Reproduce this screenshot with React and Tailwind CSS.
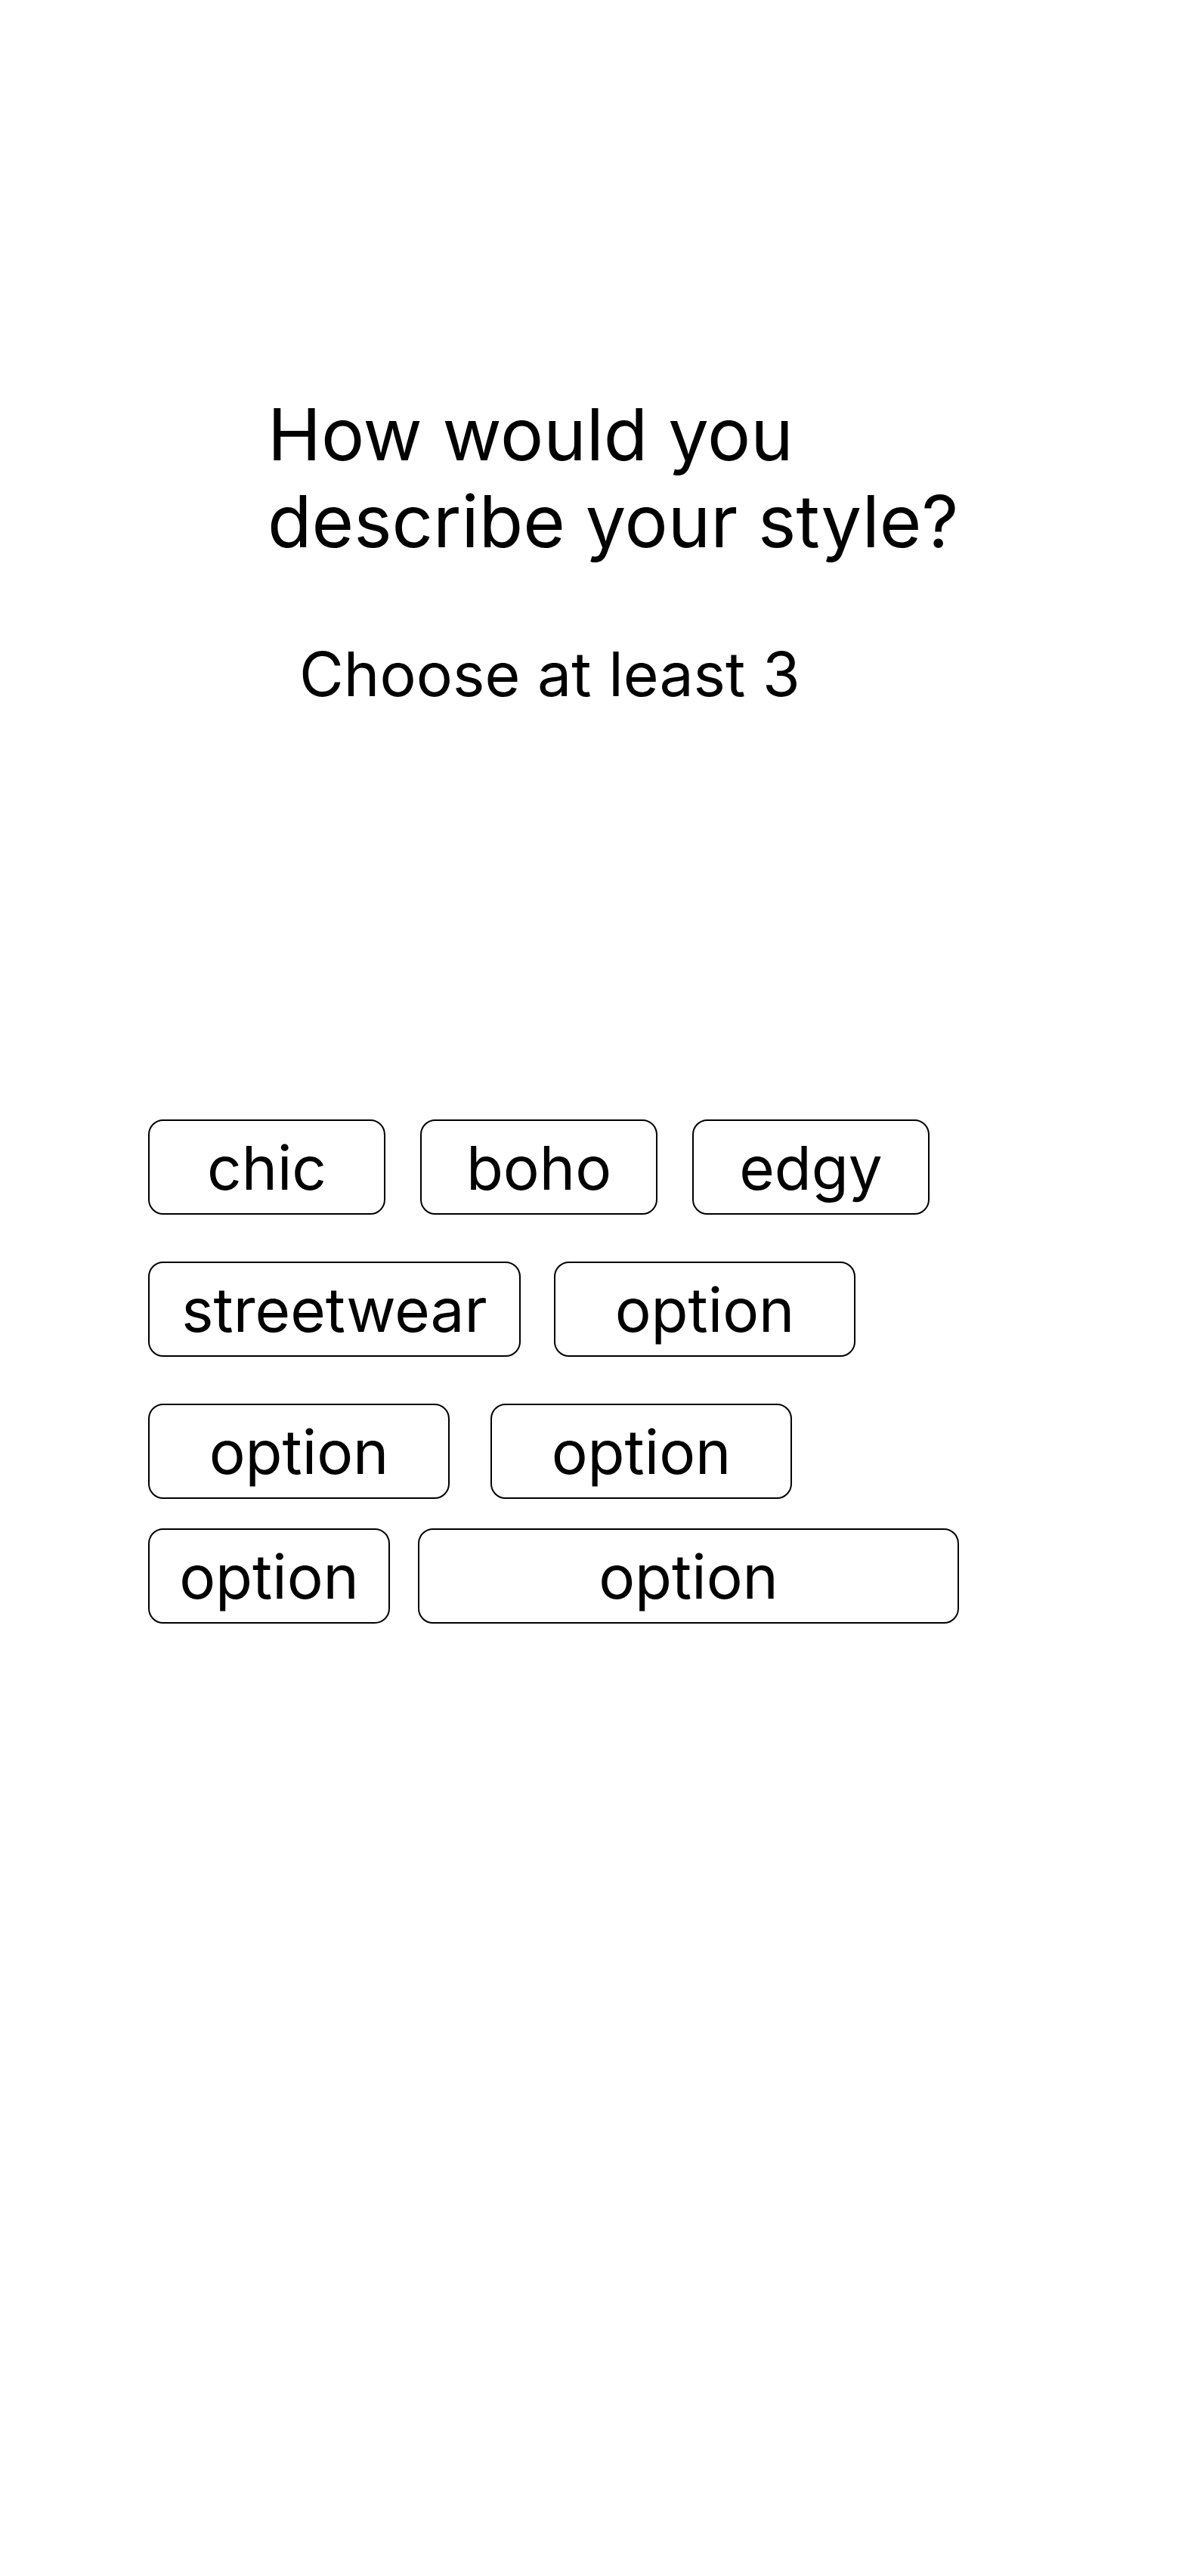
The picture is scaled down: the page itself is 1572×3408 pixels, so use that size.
const rows = [
  { gap: "gap-[46px]", chips: [["chic", "w-[314px]"], ["boho", "w-[314px]"], ["edgy", "w-[314px]"]] },
  { gap: "gap-[44px]", chips: [["streetwear", "w-[493px]"], ["option", "w-[399px]"]] },
  { gap: "gap-[54px]", chips: [["option", "w-[399px]"], ["option", "w-[399px]"]] },
  { gap: "gap-[37px]", chips: [["option", "w-[320px]"], ["option", "w-[716px]"]] },
];

const Chip = ({ label, width }) => (
  <button
    type="button"
    className={`${width} h-[126px] flex items-center justify-center rounded-[20px] border-2 border-black bg-white text-[80px] leading-[97px] text-black`}
  >
    {label}
  </button>
);

export default function App() {
  return (
    <div className="min-h-[3408px] w-full bg-white text-black font-['Inter','Liberation_Sans',sans-serif]">
      <div className="pt-[517px] pl-[354px]">
        <h1 className="text-[95.5px] font-normal leading-[115px]">
          How would you
          <br />
          describe your style?
        </h1>
        <p className="mt-[96px] pl-[42px] text-[80.5px] leading-[97px]">Choose at least 3</p>
      </div>
      <div className="mt-[541px] pl-[196px] flex flex-col">
        {rows.map((row, i) => (
          <div key={i} className={`flex ${row.gap} ${i === 3 ? "mt-[39px]" : i > 0 ? "mt-[62px]" : ""}`}>
            {row.chips.map(([label, width], j) => (
              <Chip key={j} label={label} width={width} />
            ))}
          </div>
        ))}
      </div>
    </div>
  );
}
